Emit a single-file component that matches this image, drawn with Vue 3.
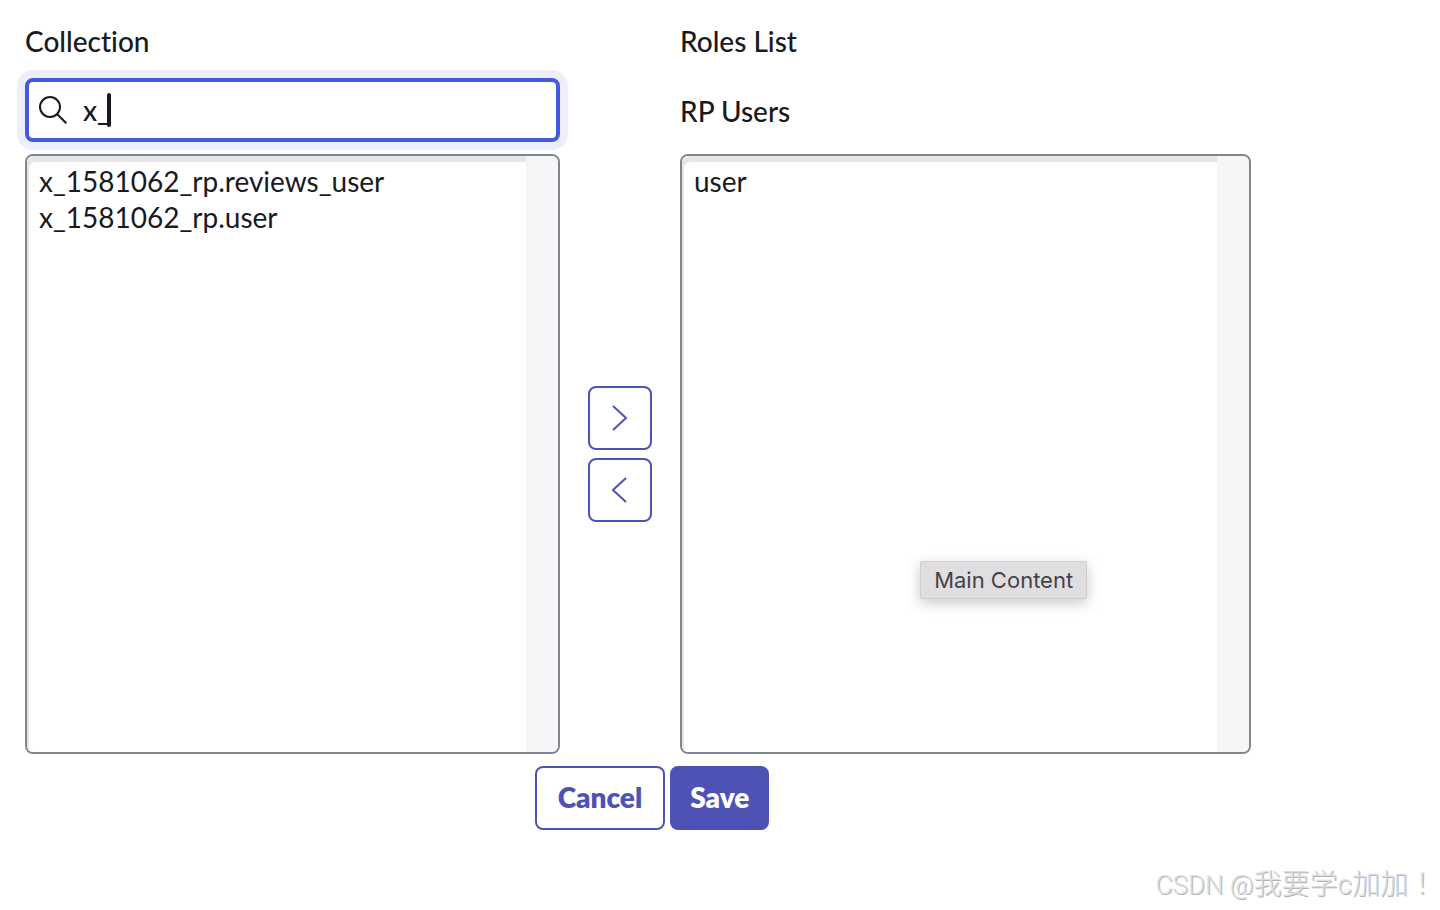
<script setup>
import { ref, computed } from 'vue'

const query = ref('x_')
const available = ref(['x_1581062_rp.reviews_user', 'x_1581062_rp.user'])
const assigned = ref(['user'])
const picked = ref([])
const removed = ref([])

const matches = computed(() => available.value.filter((name) => name.includes(query.value)))

function add() {
  assigned.value = assigned.value.concat(picked.value)
  available.value = available.value.filter((name) => !picked.value.includes(name))
  picked.value = []
}

function remove() {
  available.value = available.value.concat(removed.value)
  assigned.value = assigned.value.filter((name) => !removed.value.includes(name))
  removed.value = []
}
</script>

<template>
  <main class="page">
    <form class="form" @submit.prevent>
      <div class="columns">
        <section class="column">
          <label class="title" for="search">Collection</label>
          <div class="search">
            <svg class="search-icon" viewBox="0 0 28 28" aria-hidden="true">
              <circle cx="11" cy="11" r="10" />
              <path d="M18 18L27.300 27.300" />
            </svg>
            <div class="entry">
              <input id="search" v-model="query" type="text" autocomplete="off" />
              <span class="caret"></span>
            </div>
          </div>
          <div class="list">
            <select v-model="picked" multiple aria-label="Collection">
              <option v-for="name in matches" :key="name" :value="name">{{ name }}</option>
            </select>
            <span class="track"></span>
          </div>
        </section>

        <div class="movers">
          <button type="button" class="mover" aria-label="Add" @click="add">
            <svg viewBox="0 0 16 26" aria-hidden="true"><path d="M1 1L14 13L1 25" /></svg>
          </button>
          <button type="button" class="mover" aria-label="Remove" @click="remove">
            <svg viewBox="0 0 16 26" aria-hidden="true"><path d="M14 1L1 13L14 25" /></svg>
          </button>
        </div>

        <section class="column">
          <div class="title">Roles List</div>
          <label class="subtitle" for="roles">RP Users</label>
          <div class="list">
            <select id="roles" v-model="removed" multiple>
              <option v-for="name in assigned" :key="name" :value="name">{{ name }}</option>
            </select>
            <span class="track"></span>
            <span class="tooltip" role="tooltip">Main Content</span>
          </div>
        </section>
      </div>

      <div class="actions">
        <button type="button" class="action">Cancel</button>
        <button type="submit" class="action primary">Save</button>
      </div>
    </form>
    <div class="watermark"><span class="latin">CSDN @</span>我要学c加加！</div>
  </main>
</template>

<style>
body {
  margin: 0;
  background: #fff;
}
</style>

<style scoped>
.page {
  position: relative;
  box-sizing: border-box;
  min-height: 100vh;
  padding: 23px 13.125% 0 25px;
  color: #181a1f;
  font-family: Lato, "Liberation Sans", sans-serif;
  font-size: 28px;
  font-weight: 500;
  font-variant-ligatures: none;
  line-height: 36px;
}

.columns {
  display: grid;
  grid-template-columns: minmax(0, 535fr) 120px minmax(0, 571fr);
}

.column {
  display: flex;
  flex-direction: column;
}

.title {
  margin-bottom: 19px;
}

.search {
  display: flex;
  align-items: center;
  gap: 16px;
  box-sizing: border-box;
  height: 64px;
  margin-bottom: 12px;
  padding: 0 10px;
  border: 4px solid #4359df;
  border-radius: 8px;
  background: #fff;
  box-shadow: 0 0 0 8px #eceefb;
}

.search-icon {
  flex: none;
  width: 28px;
  height: 28px;
  fill: none;
  stroke: #181a1f;
  stroke-width: 2;
}

.entry {
  position: relative;
  flex: 1;
  display: flex;
}

.entry input {
  flex: 1;
  min-width: 0;
  height: 40px;
  padding: 0;
  border: 0;
  outline: 0;
  background: none;
  color: inherit;
  font: inherit;
  caret-color: transparent;
}

.caret {
  position: absolute;
  top: 3px;
  left: 24px;
  width: 4px;
  height: 34px;
  border-radius: 2px;
  background: #181a1f;
}

.subtitle {
  margin: 15px 0 25px;
}

.list {
  position: relative;
  display: flex;
  box-sizing: border-box;
  height: 600px;
  border: 2px solid #81858f;
  border-radius: 8px;
}

.list select {
  flex: 1;
  min-width: 0;
  appearance: none;
  margin: 0;
  padding: 8px 12px;
  border: 0;
  border-radius: 6px 0 0 6px;
  outline: 0;
  overflow: hidden;
  background: #fff;
  box-shadow: inset 2px 6px 0 #e6e6e6;
  color: inherit;
  font: inherit;
}

.list option {
  min-height: 36px;
  padding: 0;
  line-height: 36px;
}

.track {
  flex: none;
  width: 32px;
  border-radius: 0 6px 6px 0;
  background: #f5f5f8;
}

.tooltip {
  position: absolute;
  top: 405px;
  left: 42%;
  box-sizing: border-box;
  height: 38px;
  padding: 0 13px;
  border: 1px solid #d0ced1;
  border-radius: 2px;
  background: #e1dee2;
  box-shadow: 0 4px 14px rgba(0, 0, 0, 0.22);
  color: #444346;
  font-family: Inter, Roboto, sans-serif;
  font-size: 22px;
  font-weight: 400;
  white-space: nowrap;
}

.movers {
  display: flex;
  flex-direction: column;
  align-items: center;
  justify-content: center;
  gap: 8px;
  padding-top: 131px;
}

.mover {
  display: grid;
  place-items: center;
  width: 64px;
  height: 64px;
  padding: 0;
  border: 2px solid #4f52b5;
  border-radius: 8px;
  background: #fff;
}

.mover svg {
  width: 16px;
  height: 26px;
  fill: none;
  stroke: #4f52b5;
  stroke-width: 2;
}

.actions {
  display: flex;
  justify-content: center;
  gap: 5px;
  margin-top: 12px;
  padding-left: 28px;
}

.action {
  height: 64px;
  padding: 0 21px 2px;
  border: 2px solid #4f52b5;
  border-radius: 8px;
  background: #fff;
  color: #4f52b5;
  font: inherit;
  font-weight: 800;
}

.primary {
  padding: 0 18px 2px;
  background: #4f52b5;
  color: #fff;
}

.watermark {
  position: absolute;
  right: 4px;
  bottom: 7px;
  color: #dedede;
  font-family: Roboto, "Noto Sans CJK TC", sans-serif;
  font-size: 28px;
  font-weight: 300;
  text-shadow: 1px 1px 0 #b4b4b4;
  white-space: nowrap;
}

.latin {
  font-size: 26px;
}
</style>
